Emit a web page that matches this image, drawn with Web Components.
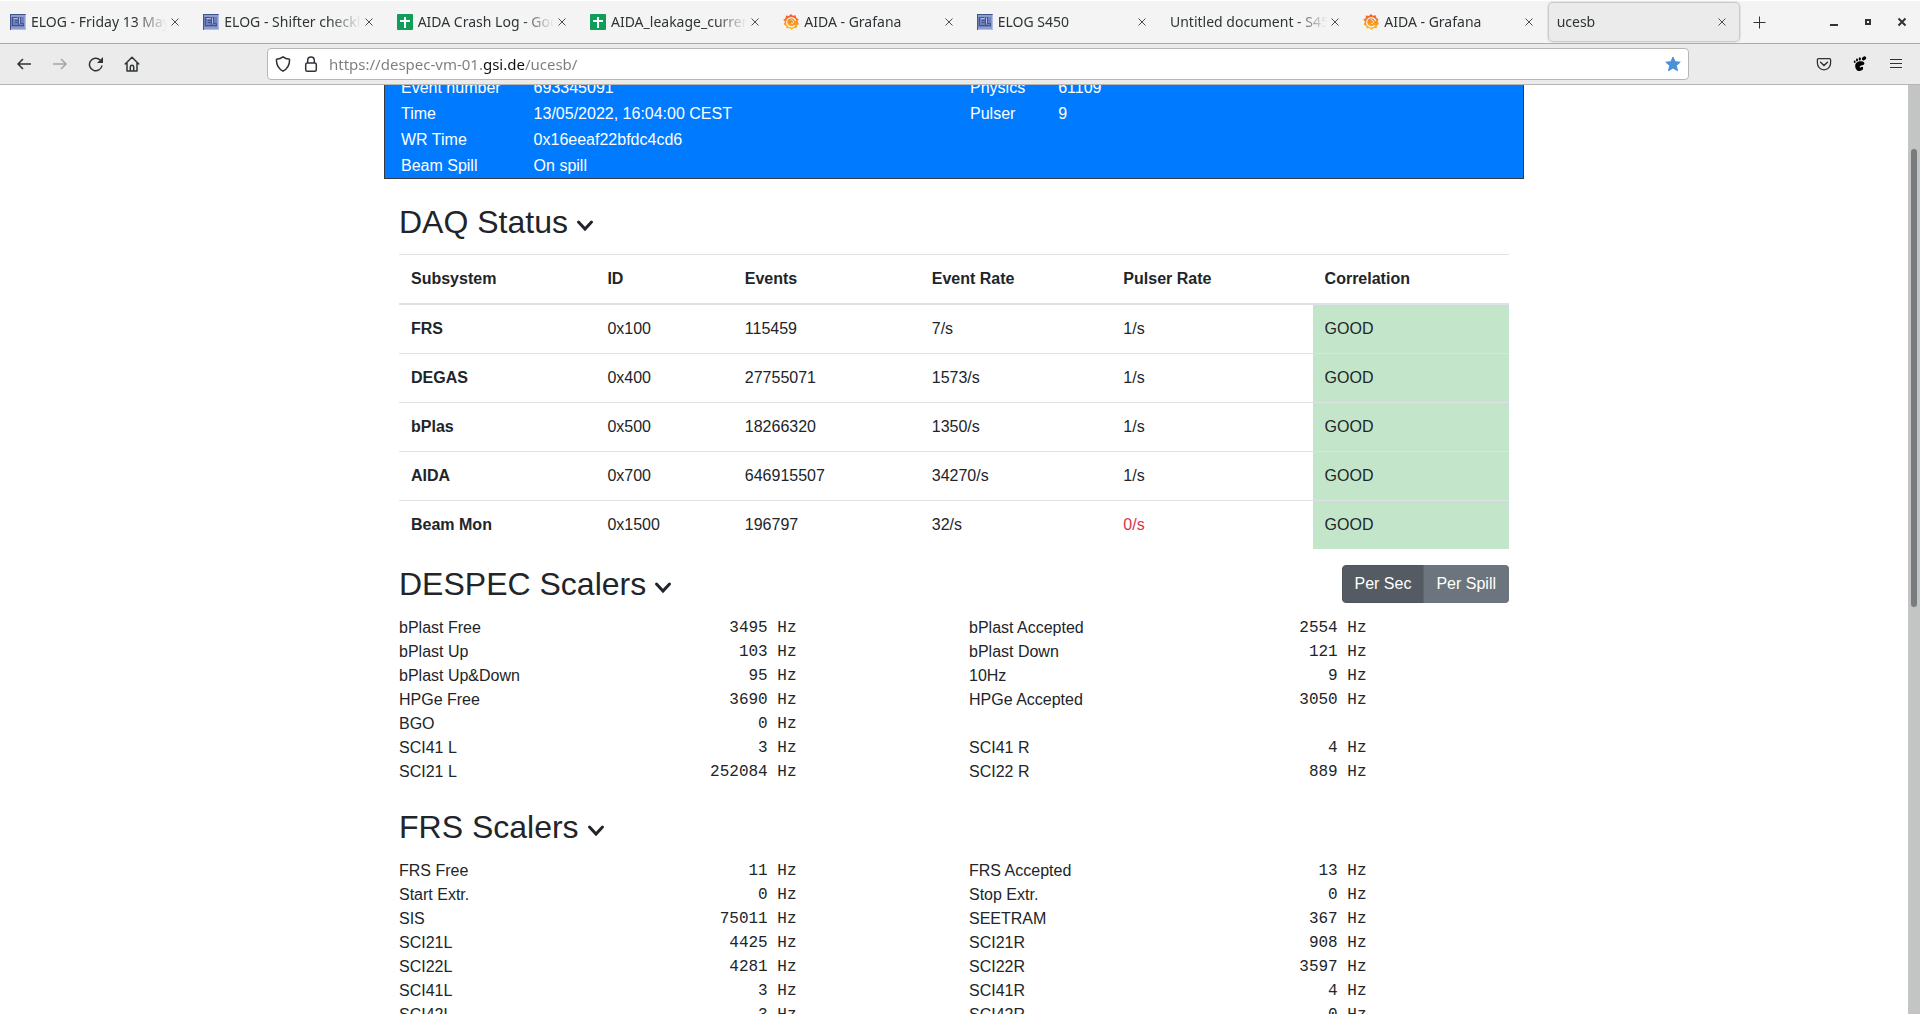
<!DOCTYPE html>
<html lang="en">
<head>
<meta charset="utf-8">
<title>ucesb</title>
<style>
  body {
    margin: 0;
    font-family: "Liberation Sans", Arial, sans-serif;
    font-size: 16px;
    line-height: 24px;
    color: #212529;
    background: #fff;
  }
</style>
</head>
<body>
<browser-window>
  <tab-strip slot="tabs">
    <browser-tab icon="elog">ELOG - Friday 13 May 2022</browser-tab>
    <browser-tab icon="elog">ELOG - Shifter checklist</browser-tab>
    <browser-tab icon="sheet">AIDA Crash Log - Google Sheets</browser-tab>
    <browser-tab icon="sheet">AIDA_leakage_currents</browser-tab>
    <browser-tab icon="grafana">AIDA - Grafana</browser-tab>
    <browser-tab icon="elog">ELOG S450</browser-tab>
    <browser-tab>Untitled document - S450</browser-tab>
    <browser-tab icon="grafana">AIDA - Grafana</browser-tab>
    <browser-tab active>ucesb</browser-tab>
  </tab-strip>
  <nav-toolbar slot="toolbar" url="https://despec-vm-01.gsi.de/ucesb/" domain="gsi.de"></nav-toolbar>

  <event-banner></event-banner>
  <page-section heading="DAQ Status">
    <daq-table></daq-table>
  </page-section>
  <page-section heading="DESPEC Scalers" compact>
    <rate-toggle slot="actions"></rate-toggle>
    <scaler-list group="despec"></scaler-list>
  </page-section>
  <page-section heading="FRS Scalers">
    <scaler-list group="frs"></scaler-list>
  </page-section>
</browser-window>

<script>
const EVENT_INFO = [
  [['Event number', '693345091'], ['Time', '13/05/2022, 16:04:00 CEST'], ['WR Time', '0x16eeaf22bfdc4cd6'], ['Beam Spill', 'On spill']],
  [['Physics', '61109'], ['Pulser', '9']]
];

const SUBSYSTEMS = [
  { name: 'FRS', id: '0x100', events: 115459, rate: 7, pulser: 1 },
  { name: 'DEGAS', id: '0x400', events: 27755071, rate: 1573, pulser: 1 },
  { name: 'bPlas', id: '0x500', events: 18266320, rate: 1350, pulser: 1 },
  { name: 'AIDA', id: '0x700', events: 646915507, rate: 34270, pulser: 1 },
  { name: 'Beam Mon', id: '0x1500', events: 196797, rate: 32, pulser: 0 }
];

// null leaves the cell empty
const SCALERS = {
  despec: [
    ['bPlast Free', 3495], ['bPlast Accepted', 2554],
    ['bPlast Up', 103], ['bPlast Down', 121],
    ['bPlast Up&amp;Down', 95], ['10Hz', 9],
    ['HPGe Free', 3690], ['HPGe Accepted', 3050],
    ['BGO', 0], null,
    ['SCI41 L', 3], ['SCI41 R', 4],
    ['SCI21 L', 252084], ['SCI22 R', 889]
  ],
  frs: [
    ['FRS Free', 11], ['FRS Accepted', 13],
    ['Start Extr.', 0], ['Stop Extr.', 0],
    ['SIS', 75011], ['SEETRAM', 367],
    ['SCI21L', 4425], ['SCI21R', 908],
    ['SCI22L', 4281], ['SCI22R', 3597],
    ['SCI41L', 3], ['SCI41R', 4],
    ['SCI42L', 3], ['SCI42R', 0]
  ]
};

const FAVICONS = {
  elog: `<svg width="16" height="16" viewBox="0 0 16 16">
    <path fill="#8d9bd3" d="M0 0h16v16H0z"/>
    <path fill="#7080bb" d="M1 3h13v10H1z"/>
    <path fill="none" stroke="#3f558b" d="M0 .5h15.500M.5 0v16M2 3.500h5M2.500 3v9M2 11.500h12M5 6.500h3M5 8.500h3M8.500 3v8M10.500 3v6.500h3v2"/>
    <path fill="none" stroke="#b2bdec" d="M15.500 1v15M1 15.500h15M3.500 4.500h4M9.500 4v5.500"/>
  </svg>`,
  sheet: `<svg width="16" height="16" viewBox="0 0 16 16">
    <rect width="16" height="16" rx="1" fill="#0f9d58"/>
    <path fill="#fff" d="M7 3h2v3h4v2H9v6H7V8H3V6h4z"/>
  </svg>`,
  grafana: `<svg width="16" height="16" viewBox="0 0 16 16">
    <linearGradient id="g" x1="0" y1="1" x2="0" y2="0"><stop offset="0" stop-color="#fcc51b"/><stop offset="1" stop-color="#f05a2b"/></linearGradient>
    <path fill="url(#g)" d="M8 0l1.800 1.700 3-.5.400 2.600L15.500 5l-.8 2.400L16 10l-2 1.500-.3 2.700-2.800-.3L8.300 16l-1.900-2-2.800.5-.5-2.800L.7 10.400l1.200-2.600L.2 5.500l2.400-1.300L2.900 1.600l2.900.3z"/>
    <path fill="none" stroke="#f4f4f4" stroke-width="1.200" d="M12.700 7A4.600 4.600 0 1 0 11.800 11.300"/>
    <path fill="none" stroke="#f4f4f4" stroke-width="1" d="M8.100 8.900c.6 1 2.400.6 2.400-.9 0-1.600-1.600-2.500-3-2.100"/>
  </svg>`
};

const icon = (body, attrs = '') =>
  `<svg width="16" height="16" viewBox="0 0 16 16" fill="none" stroke="currentColor" aria-hidden="true" ${attrs}>${body}</svg>`;

function textWidth(text, font) {
  const ctx = document.createElement('canvas').getContext('2d');
  ctx.font = font;
  return Math.round(ctx.measureText(text).width);
}

function define(name, render) {
  customElements.define(name, class extends HTMLElement {
    connectedCallback() {
      if (this.shadowRoot) return;
      this.attachShadow({ mode: 'open' }).innerHTML = render(this);
    }
  });
}

define('browser-window', () => `
  <style>
    :host {
      display: flex;
      flex-direction: column;
      height: 100vh;
    }
    .view {
      flex: 1;
      min-height: 0;
      display: flex;
    }
    .page {
      flex: 1;
      overflow-y: scroll;
      scrollbar-width: none;
    }
    .container {
      max-width: 1140px;
      margin: 0 auto;
      padding-bottom: 24px;
    }
    .scrollbar {
      width: 12px;
      box-sizing: border-box;
      padding: 64px 3px 0;
      background: #c3c5c4;
    }
    .thumb {
      height: 53%;
      border-radius: 3px;
      background: #797c7e;
    }
  </style>
  <slot name="tabs"></slot>
  <slot name="toolbar"></slot>
  <div class="view">
    <main class="page"><div class="container"><slot></slot></div></main>
    <div class="scrollbar"><div class="thumb"></div></div>
  </div>
`);

define('tab-strip', () => `
  <style>
    :host {
      display: flex;
      height: 43px;
      background: #f4f4f4;
      border-bottom: 1px solid #a9aca9;
      color: #2e3436;
      box-shadow: inset 0 1px #fff;
    }
    .tabs {
      flex: 1;
      min-width: 0;
      display: flex;
    }
    .controls {
      width: 180px;
      display: flex;
      align-items: center;
      box-sizing: border-box;
      padding: 1px 8px 0 9px;
    }
    button {
      width: 20px;
      height: 20px;
      padding: 0;
      border: 0;
      background: none;
      color: inherit;
      display: grid;
      place-items: center;
    }
    .window {
      margin-left: auto;
      display: flex;
      gap: 14px;
    }
  </style>
  <div class="tabs" role="tablist"><slot></slot></div>
  <div class="controls">
    <button aria-label="New tab">${icon('<path d="M8.500 2.500v12M2.500 8.500h12"/>')}</button>
    <div class="window">
      <button aria-label="Minimize">${icon('<path stroke-width="2" d="M4 11h8"/>')}</button>
      <button aria-label="Maximize">${icon('<path stroke-width="2" d="M6 6h4v4H6z"/>')}</button>
      <button aria-label="Close">${icon('<path stroke-width="2" d="M4.500 4.500l7 7M11.500 4.500l-7 7"/>')}</button>
    </div>
  </div>
`);

define('browser-tab', (el) => `
  <style>
    :host {
      flex: 1 1 0;
      min-width: 0;
      display: flex;
      align-items: center;
      box-sizing: border-box;
      margin: 3px 1px 2px 2px;
      padding: 0 9px 0 8px;
      border-radius: 4px;
      font: 14px/20px "Noto Sans", sans-serif;
    }
    :host([active]) {
      background: #ebebeb;
      box-shadow: 0 0 2px 1px #bcbac4;
    }
    svg {
      flex: none;
    }
    .favicon {
      display: flex;
      margin-right: 5px;
    }
    .label {
      flex: 1;
      min-width: 0;
      overflow: hidden;
      white-space: nowrap;
      mask-image: linear-gradient(to left, transparent, #000 32px);
    }
    button {
      padding: 0;
      border: 0;
      background: none;
      color: #4b4f52;
      display: flex;
    }
  </style>
  ${el.hasAttribute('icon') ? `<span class="favicon">${FAVICONS[el.getAttribute('icon')]}</span>` : ''}
  <span class="label"><slot></slot></span>
  <button aria-label="Close tab">${icon('<path d="M4.500 4.500l7 7M11.500 4.500l-7 7"/>')}</button>
`);

define('nav-toolbar', (el) => {
  const url = el.getAttribute('url');
  const domain = el.getAttribute('domain');
  const font = '15px "Noto Sans", sans-serif';
  const start = textWidth(url.slice(0, url.indexOf(domain)), font);
  const end = start + textWidth(domain, font);
  return `
  <style>
    :host {
      display: flex;
      align-items: center;
      height: 40px;
      background: #ebebeb;
      border-bottom: 1px solid #b6b6b3;
      color: #2e3436;
    }
    .nav, .tools {
      display: flex;
      gap: 16px;
      box-sizing: border-box;
    }
    .nav {
      width: 267px;
      padding-left: 14px;
    }
    .tools {
      width: 231px;
      justify-content: flex-end;
      padding-right: 14px;
    }
    button {
      width: 20px;
      height: 20px;
      padding: 0;
      border: 0;
      background: none;
      color: inherit;
      display: grid;
      place-items: center;
    }
    button:disabled {
      color: #a3a6a6;
    }
    .url {
      flex: 1;
      min-width: 0;
      height: 32px;
      box-sizing: border-box;
      display: flex;
      align-items: center;
      gap: 8px;
      padding: 0 5px;
      border: 1px solid #b6b6b3;
      border-radius: 4px;
      background: #fff;
    }
    input {
      flex: 1;
      min-width: 0;
      padding: 0;
      border: 0;
      outline: 0;
      font: ${font};
      line-height: 20px;
      /* the host's own domain is darker than the rest of the address */
      color: transparent;
      background: linear-gradient(to right, #7b7d7d ${start}px, #111 ${start}px ${end}px, #7b7d7d ${end}px);
      background-clip: text;
    }
    .star {
      color: #4a90d9;
    }
  </style>
  <div class="nav">
    <button aria-label="Back">${icon('<path stroke-width="1.500" d="M15 8H2M7 3L2 8l5 5"/>')}</button>
    <button aria-label="Forward" disabled>${icon('<path stroke-width="1.500" d="M1 8h13M9 3l5 5-5 5"/>')}</button>
    <button aria-label="Reload">${icon('<path stroke-width="1.500" d="M14 9.500A6.300 6.300 0 1 1 12.200 4"/><path fill="currentColor" stroke="none" d="M15 1v6H9z"/>')}</button>
    <button aria-label="Home">${icon('<path stroke-width="1.500" stroke-linejoin="round" stroke-linecap="round" d="M1.200 8L8 1.200 14.800 8M3 7v8h10V7M6.300 15v-4a1.700 1.700 0 0 1 3.400 0v4"/>')}</button>
  </div>
  <div class="url">
    <button aria-label="Tracking protection">${icon('<path stroke-width="1.500" stroke-linejoin="round" d="M8 .8c2 1.600 4.200 2.200 6.500 2.400.3 5-1.600 9.300-6.500 12C3.100 12.500 1.200 8.200 1.500 3.200 3.800 3 6 2.400 8 .8z"/>')}</button>
    <button aria-label="Connection secure">${icon('<rect x="2.700" y="7" width="10.600" height="8.200" rx="1.500" stroke-width="1.500"/><path stroke-width="1.500" d="M4.700 7V4.300a3.300 3.300 0 0 1 6.600 0V7"/>')}</button>
    <input type="text" aria-label="Address" value="${url}">
    <button class="star" aria-label="Bookmark this page">${icon('<path fill="currentColor" stroke-linejoin="round" d="M8 1l2.100 4.700 5.100.5-3.900 3.400 1.200 5.100L8 12l-4.500 2.700 1.200-5.100L.8 6.200l5.100-.5z"/>')}</button>
  </div>
  <div class="tools">
    <button aria-label="Save to Pocket">${icon('<path stroke-width="1.300" d="M2.600 2.600h10.800c.7 0 1.200.5 1.200 1.200V7c0 4-3 6.800-6.600 6.800S1.400 11 1.400 7V3.800c0-.7.5-1.200 1.200-1.200z"/><path stroke-width="1.500" stroke-linecap="round" d="M4.600 6.300L8 9.500l3.400-3.200"/>')}</button>
    <button aria-label="GNOME extensions">${icon('<path d="M10.500 5.400c-4-.6-7.300.9-7.300 4.600 0 3 2 5.300 4.600 5 2.100-.2 3.600-1.500 3.300-3.200-.2-1.300-1.600-1-2.100-.5-.7.600-1.500.2-1.300-.7.400-1.500 4.600-1 4.700-3.200 0-1-.8-1.800-1.900-2z"/><ellipse cx="12" cy="2.400" rx="2.300" ry="1.700" transform="rotate(-35 12 2.400)"/><ellipse cx="7.800" cy="2.900" rx="1.100" ry="1.600"/><ellipse cx="5" cy="4" rx="1" ry="1.400"/><ellipse cx="2.700" cy="5.700" rx=".9" ry="1.200"/>', 'style="fill:#000;stroke:none"')}</button>
    <button aria-label="Menu">${icon('<path d="M2 3.500h12M2 7.500h12M2 11.500h12"/>')}</button>
  </div>
`;
});

define('event-banner', () => `
  <style>
    :host {
      display: grid;
      grid-template-columns: 1fr 1fr;
      border: 1px solid #343a40;
      border-top: 0;
      background: #007bff;
      color: #fff;
    }
    table {
      justify-self: start;
      align-self: start;
      margin-left: 15px;
      border-spacing: 0;
    }
    th, td {
      padding: 2px 1px 0;
      text-align: left;
      font-weight: normal;
    }
    th {
      padding-right: 32px;
    }
  </style>
  ${EVENT_INFO.map(rows => `<table>${rows.map(([label, value]) =>
    `<tr><th scope="row">${label}</th><td>${value}</td></tr>`).join('')}</table>`).join('')}
`);

define('page-section', (el) => `
  <style>
    :host {
      display: block;
      padding: 24px 15px 0;
    }
    :host([compact]) {
      padding-top: 16px;
    }
    header {
      display: flex;
      justify-content: space-between;
      align-items: center;
      margin-bottom: 13px;
    }
    h2 {
      margin: 0;
      display: flex;
      align-items: center;
      gap: 8px;
      font-size: 32px;
      line-height: 38px;
      font-weight: normal;
    }
    button {
      padding: 0;
      border: 0;
      background: none;
      color: inherit;
      display: flex;
    }
  </style>
  <header>
    <h2>${el.getAttribute('heading')}
      <button aria-label="Collapse ${el.getAttribute('heading')}" aria-expanded="true">
        <svg width="18" height="24" viewBox="0 0 18 24" fill="none" stroke="currentColor" stroke-width="3" stroke-linecap="round"><path d="M2.500 12L9 19l6.500-7"/></svg>
      </button>
    </h2>
    <slot name="actions"></slot>
  </header>
  <slot></slot>
`);

define('daq-table', () => `
  <style>
    :host {
      display: block;
    }
    table {
      width: 100%;
      border-collapse: collapse;
    }
    th, td {
      padding: 12px;
      border-top: 1px solid #dee2e6;
      text-align: left;
      vertical-align: top;
    }
    thead th {
      border-bottom: 2px solid #dee2e6;
    }
    .good {
      background: #c3e6cb;
    }
    .bad {
      color: #dc3545;
    }
  </style>
  <table>
    <thead>
      <tr><th>Subsystem</th><th>ID</th><th>Events</th><th>Event Rate</th><th>Pulser Rate</th><th>Correlation</th></tr>
    </thead>
    <tbody>
      ${SUBSYSTEMS.map(s => `
        <tr>
          <th scope="row">${s.name}</th>
          <td>${s.id}</td>
          <td>${s.events}</td>
          <td>${s.rate}/s</td>
          <td class="${s.pulser ? '' : 'bad'}">${s.pulser}/s</td>
          <td class="good">GOOD</td>
        </tr>`).join('')}
    </tbody>
  </table>
`);

define('rate-toggle', () => `
  <style>
    :host {
      display: flex;
    }
    button {
      padding: 6px 12px;
      border: 1px solid #6c757d;
      border-radius: 0 4px 4px 0;
      background: #6c757d;
      color: #fff;
      font: inherit;
    }
    button[aria-pressed="true"] {
      border-color: #4e555b;
      border-radius: 4px 0 0 4px;
      background: #545b62;
    }
    button + button {
      margin-left: -1px;
      border-left-color: #5f676e;
    }
  </style>
  <button aria-pressed="true">Per Sec</button>
  <button aria-pressed="false">Per Spill</button>
`);

define('scaler-list', (el) => `
  <style>
    :host {
      display: grid;
      grid-template-columns: 1fr 1fr;
      column-gap: 30px;
    }
    .scaler {
      display: grid;
      grid-template-columns: repeat(4, 1fr);
      column-gap: 30px;
      min-height: 24px;
    }
    .name {
      grid-column: span 2;
    }
    .value {
      font-family: "Liberation Mono", "Courier New", monospace;
      text-align: right;
      white-space: pre;
    }
  </style>
  ${SCALERS[el.getAttribute('group')].map(s => s
    ? `<div class="scaler"><span class="name">${s[0]}</span><span class="value">${s[1]} Hz</span></div>`
    : '<div class="scaler"></div>').join('')}
`);

// start a little way down the page, with the banner partly scrolled off
document.querySelector('browser-window').shadowRoot.querySelector('.page').scrollTop = 11;
</script>
</body>
</html>
